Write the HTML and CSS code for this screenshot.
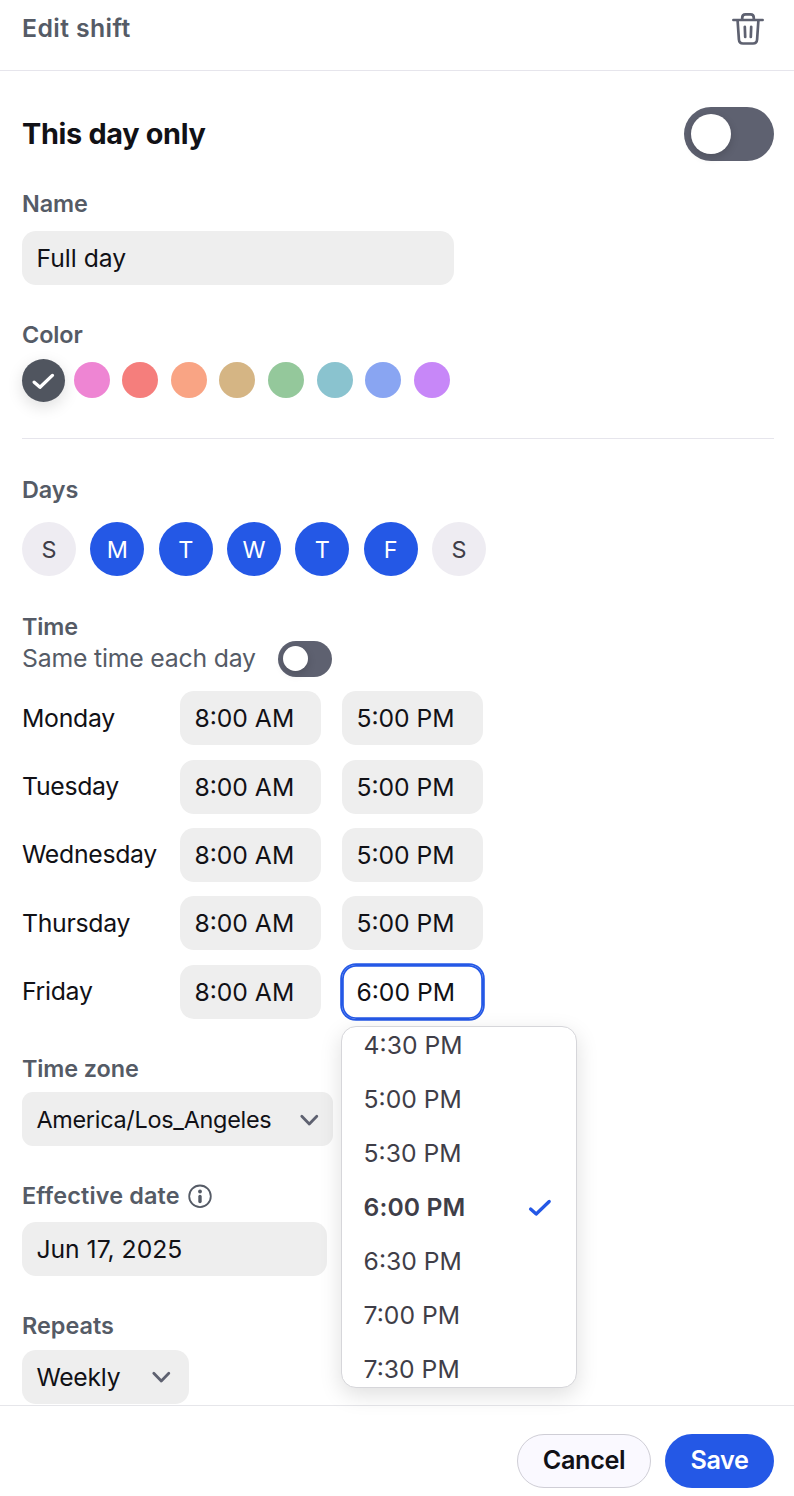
FILE: index.html
```html
<!DOCTYPE html>
<html lang="en">
<head>
<meta charset="utf-8">
<title>Edit shift</title>
<link rel="stylesheet" href="styles.css">
</head>
<body>
<header class="header">
  <h1 class="header-title">Edit shift</h1>
  <svg class="trash" width="34" height="34" viewBox="0 0 34 34" fill="none" stroke="#5e6170" stroke-width="2.7" stroke-linecap="round" stroke-linejoin="round">
    <path d="M2.3 8H31.7" stroke-width="2.5"/>
    <path d="M11.2 7.5V6Q11.2 2.3 14.5 2.3H19.5Q22.8 2.3 22.8 6V7.5"/>
    <path d="M6.6 8.5L7.9 27.5Q8.2 31.5 12 31.5H22Q25.8 31.5 26.1 27.5L27.4 8.5"/>
    <path d="M13.8 14.8L14.2 25M20.2 14.8L19.8 25"/>
  </svg>
</header>
<main class="form">
  <div class="only-row">
    <h2 class="only-title">This day only</h2>
    <span class="toggle"></span>
  </div>

  <section class="group name">
    <div class="label">Name</div>
    <div class="field">Full day</div>
  </section>

  <section class="group color">
    <div class="label">Color</div>
    <div class="swatches">
      <span class="swatch selected"><svg width="24" height="20" viewBox="0 0 24 20" fill="none" stroke="#fff" stroke-width="3.3" stroke-linecap="round" stroke-linejoin="round"><path d="M2.2 11.2L8 16.2L20.4 4.4"/></svg></span>
      <span class="swatch pink"></span>
      <span class="swatch red"></span>
      <span class="swatch orange"></span>
      <span class="swatch tan"></span>
      <span class="swatch green"></span>
      <span class="swatch teal"></span>
      <span class="swatch blue"></span>
      <span class="swatch purple"></span>
    </div>
  </section>

  <section class="group days">
    <div class="label">Days</div>
    <div class="day-list">
      <span class="day">S</span><span class="day on">M</span><span class="day on">T</span><span class="day on">W</span><span class="day on">T</span><span class="day on">F</span><span class="day">S</span>
    </div>
  </section>

  <section class="group time">
    <div class="label">Time</div>
    <div class="same-row"><span class="same-text">Same time each day</span><span class="toggle small"></span></div>
    <div class="hours">
      <div class="row"><span class="row-day">Monday</span><div class="field">8:00 AM</div><div class="field">5:00 PM</div></div>
      <div class="row"><span class="row-day">Tuesday</span><div class="field">8:00 AM</div><div class="field">5:00 PM</div></div>
      <div class="row"><span class="row-day">Wednesday</span><div class="field">8:00 AM</div><div class="field">5:00 PM</div></div>
      <div class="row"><span class="row-day">Thursday</span><div class="field">8:00 AM</div><div class="field">5:00 PM</div></div>
      <div class="row"><span class="row-day">Friday</span><div class="field">8:00 AM</div>
        <div class="field focused">6:00 PM
          <div class="menu">
            <div class="option">4:30 PM</div>
            <div class="option">5:00 PM</div>
            <div class="option">5:30 PM</div>
            <div class="option chosen">6:00 PM<svg width="24" height="20" viewBox="0 0 24 20" fill="none" stroke="#2458e6" stroke-width="3.3" stroke-linecap="round" stroke-linejoin="round"><path d="M2.6 12L8.2 17L21.2 4.5"/></svg></div>
            <div class="option">6:30 PM</div>
            <div class="option">7:00 PM</div>
            <div class="option">7:30 PM</div>
          </div>
        </div>
      </div>
    </div>
  </section>

  <section class="group zone">
    <div class="label">Time zone</div>
    <div class="field select">America/Los_Angeles<svg class="chevron" width="20" height="14" viewBox="0 0 20 14" fill="none" stroke="#5e6170" stroke-width="2.8" stroke-linecap="round" stroke-linejoin="round"><path d="M2.8 3.2L10.3 10.9L17.8 3.2"/></svg></div>
  </section>

  <section class="group effective">
    <div class="label">Effective date <svg class="info" width="26" height="26" viewBox="0 0 26 26" fill="none" stroke="#555b66"><circle cx="13" cy="13.3" r="10.8" stroke-width="1.8"/><circle cx="13" cy="8.5" r="1.9" fill="#555b66" stroke="none"/><path d="M13 13.5V18.6" stroke-width="3.4" stroke-linecap="round"/></svg></div>
    <div class="field">Jun 17, 2025</div>
  </section>

  <section class="group repeats">
    <div class="label">Repeats</div>
    <div class="field select">Weekly<svg class="chevron" width="20" height="14" viewBox="0 0 20 14" fill="none" stroke="#5e6170" stroke-width="2.8" stroke-linecap="round" stroke-linejoin="round"><path d="M2.8 3.2L10.3 10.9L17.8 3.2"/></svg></div>
  </section>
</main>
<footer class="footer">
  <button class="btn cancel">Cancel</button>
  <button class="btn save">Save</button>
</footer>
</body>
</html>
```
FILE: styles.css
```css
* { box-sizing: border-box; }
body {
  margin: 0;
  background: #fff;
  color: #111116;
  font-family: Inter, "Liberation Sans", sans-serif;
  font-size: 24.7px;
}
h1, h2 { margin: 0; }
.header {
  display: flex;
  justify-content: space-between;
  height: 71px;
  padding: 12px 29px 0 22px;
  border-bottom: 1px solid #e6e5ec;
}
.header-title { font-size: 24.8px; font-weight: 600; line-height: 32px; color: #555b66; letter-spacing: 0.4px; }
.form { padding: 36px 20px 0 22px; }
.only-row { display: flex; justify-content: space-between; align-items: center; height: 54px; }
.only-title { padding-bottom: 2px; font-size: 28.8px; font-weight: 700; letter-spacing: -0.3px; }
.toggle { display: block; width: 90px; height: 54px; padding: 7px; border-radius: 27px; background: #5e6170; }
.toggle::before { content: ""; display: block; width: 40px; height: 40px; border-radius: 50%; background: #fff; box-shadow: 0 3px 8px rgba(0, 0, 0, 0.16); }
.toggle.small { width: 54px; height: 36px; padding: 5px; border-radius: 18px; }
.toggle.small::before { width: 25.4px; height: 25.4px; }
.label { display: flex; align-items: center; height: 30px; font-size: 23.4px; font-weight: 600; color: #555b66; letter-spacing: -0.1px; }
.name .label, .color .label, .days .label { padding-bottom: 2px; }
.field {
  display: flex;
  align-items: center;
  height: 54px;
  padding-left: 14.4px;
  border-radius: 14px;
  background: #eee;
  white-space: nowrap;
}
.name { margin-top: 28px; }
.name .field { width: 432px; margin-top: 12px; }
.color { margin-top: 35px; padding-bottom: 36px; border-bottom: 1px solid #e6e5ec; }
.swatches { display: flex; align-items: center; height: 43px; margin-top: 9px; gap: 12.6px; }
.swatch { width: 36px; height: 36px; margin-bottom: 0.8px; border-radius: 50%; }
.swatch.selected { display: grid; place-items: center; width: 43px; height: 43px; margin: 0 -4px 0 0; background: #50555f; box-shadow: 0 5px 16px rgba(0, 0, 0, 0.13); }
.pink { background: #ee85d3; }
.red { background: #f57e7c; }
.orange { background: #f9a484; }
.tan { background: #d5b584; }
.green { background: #94c89b; }
.teal { background: #8ac3cf; }
.blue { background: #89a5f2; }
.purple { background: #c787f8; }
.days { margin-top: 36px; }
.day-list { display: flex; gap: 14.35px; margin-top: 17px; }
.day { display: grid; place-items: center; width: 54px; height: 54px; border-radius: 50%; background: #eeecf2; color: #3f3e48; font-size: 23.4px; }
.day.on { background: #2458e6; color: #fff; }
.time { margin-top: 36px; }
.time .label { height: 29px; }
.same-row { display: flex; align-items: center; height: 36px; }
.same-text { width: 256px; padding-bottom: 2px; color: #555b66; font-size: 24.8px; letter-spacing: -0.2px; white-space: nowrap; }
.hours { display: grid; gap: 14.4px; margin-top: 14.2px; }
.row { display: grid; grid-template-columns: 137px 141px 141px; column-gap: 21px; align-items: center; }
.row-day { font-size: 24.8px; letter-spacing: -0.3px; padding-bottom: 1px; }
.focused { position: relative; background: #fff; box-shadow: inset 0 0 0 1.8px #2458e6, 0 0 0 1.8px #2458e6; }
.menu {
  position: absolute;
  z-index: 2;
  top: 61px;
  left: -1px;
  width: 236px;
  height: 362px;
  overflow: hidden;
  border: 1px solid #d6d6da;
  border-radius: 15px;
  background: #fff;
  box-shadow: 0 7px 22px rgba(0, 0, 0, 0.13);
}
.option { display: flex; align-items: center; justify-content: space-between; height: 54px; padding: 0 24px 1px 21.6px; color: #3f3e48; }
.option:first-child { margin-top: -8px; }
.chosen { font-weight: 600; letter-spacing: 0.1px; }
.zone { margin-top: 35.2px; }
.zone .field { width: 311px; margin-top: 8px; padding-top: 2px; font-size: 23.4px; letter-spacing: -0.27px; border-radius: 11px; }
.select { justify-content: space-between; padding-right: 14px; }
.effective { margin-top: 35px; }
.effective .label { gap: 7px; letter-spacing: 0.15px; }
.effective .field { width: 305px; margin-top: 11px; }
.repeats { margin-top: 35px; }
.repeats .label { letter-spacing: 0; }
.repeats .field { width: 167px; margin-top: 9px; padding-right: 18px; letter-spacing: -0.25px; }
.footer { display: flex; justify-content: flex-end; gap: 14px; height: 91px; margin-top: 1px; padding: 28px 20px 0; border-top: 1px solid #e6e6ea; }
.btn { height: 54px; padding: 0 0 2px; border: 0; border-radius: 27px; font: 600 25.2px Inter, "Liberation Sans", sans-serif; letter-spacing: -0.35px; }
.cancel { width: 134px; border: 1px solid #cfced6; background: #faf9ff; color: #111116; }
.save { width: 109px; background: #2458e6; color: #fff; }
```
